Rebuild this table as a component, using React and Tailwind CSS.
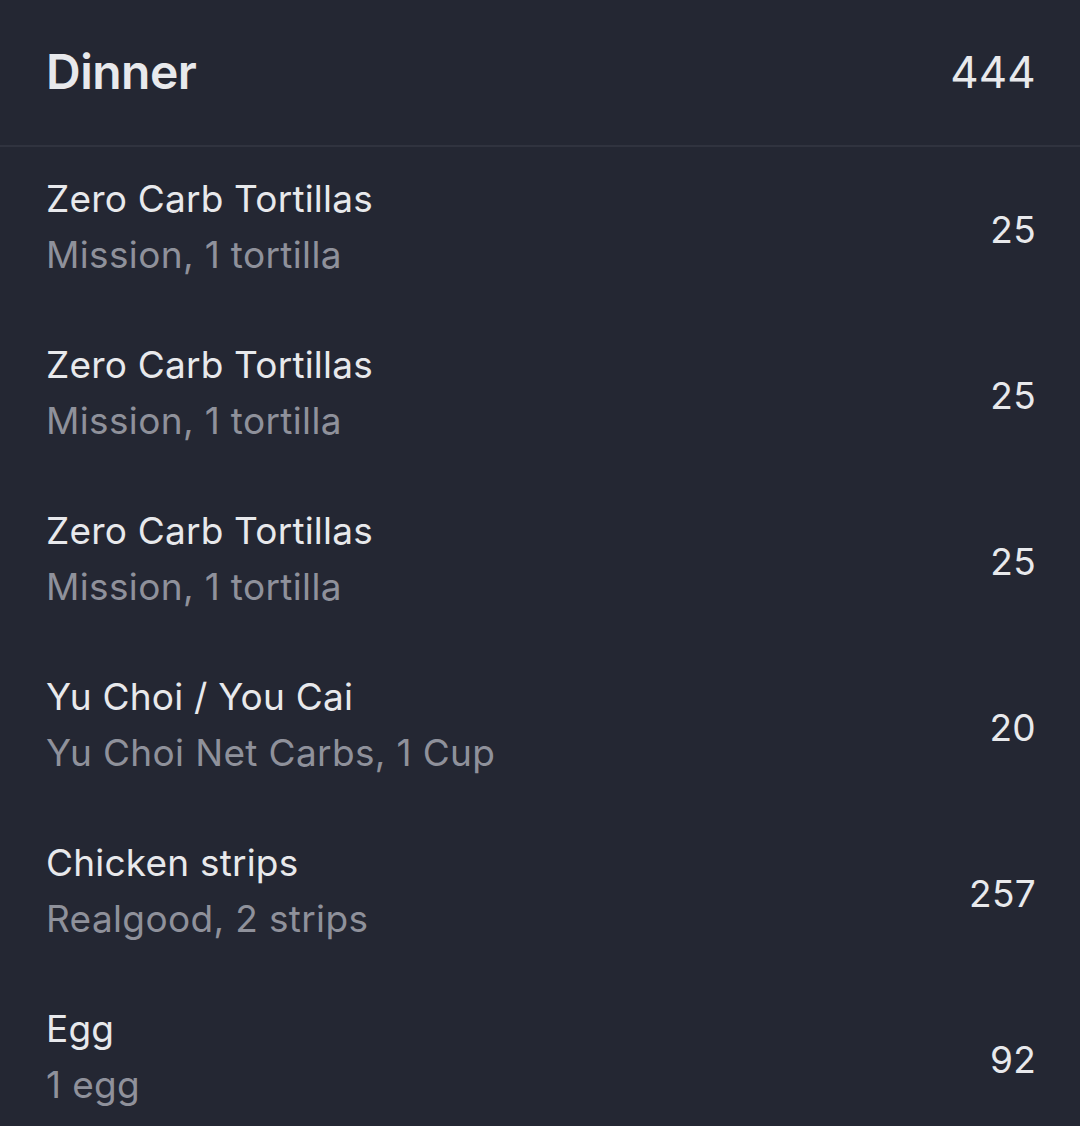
// App.jsx
const items = [
  { name: "Zero Carb Tortillas", detail: "Mission, 1 tortilla", cals: 25 },
  { name: "Zero Carb Tortillas", detail: "Mission, 1 tortilla", cals: 25 },
  { name: "Zero Carb Tortillas", detail: "Mission, 1 tortilla", cals: 25 },
  { name: "Yu Choi / You Cai", detail: "Yu Choi Net Carbs, 1 Cup", cals: 20 },
  { name: "Chicken strips", detail: "Realgood, 2 strips", cals: 257 },
  { name: "Egg", detail: "1 egg", cals: 92 },
];

const App = () => {
  return (
    <div className="h-[1126px] w-[1080px] overflow-hidden bg-[#242733] font-['Inter',sans-serif] text-[#e8e9ec]">
      {/* Section header */}
      <div className="flex h-[147px] items-center justify-between border-b-2 border-[#30333f] pl-[46px] pr-[44px] pb-[2px]">
        <span className="text-[48px] font-semibold tracking-[-0.5px]">Dinner</span>
        <span className="text-[44px] font-normal tracking-[0.2px]">444</span>
      </div>

      {/* Entries */}
      <div className="flex flex-col">
        {items.map((item, i) => (
          <div key={i} className="flex h-[166px] items-center justify-between pl-[46px] pr-[44px]">
            <div className="flex flex-col -mt-[6px]">
              <span className="text-[37px] leading-[56px] tracking-[0.2px]">{item.name}</span>
              <span className="text-[37px] leading-[56px] tracking-[0.35px] text-[#8f919b]">{item.detail}</span>
            </div>
            <span className="text-[37px] tracking-[0.3px]">{item.cals}</span>
          </div>
        ))}
      </div>
    </div>
  );
};

export default App;
